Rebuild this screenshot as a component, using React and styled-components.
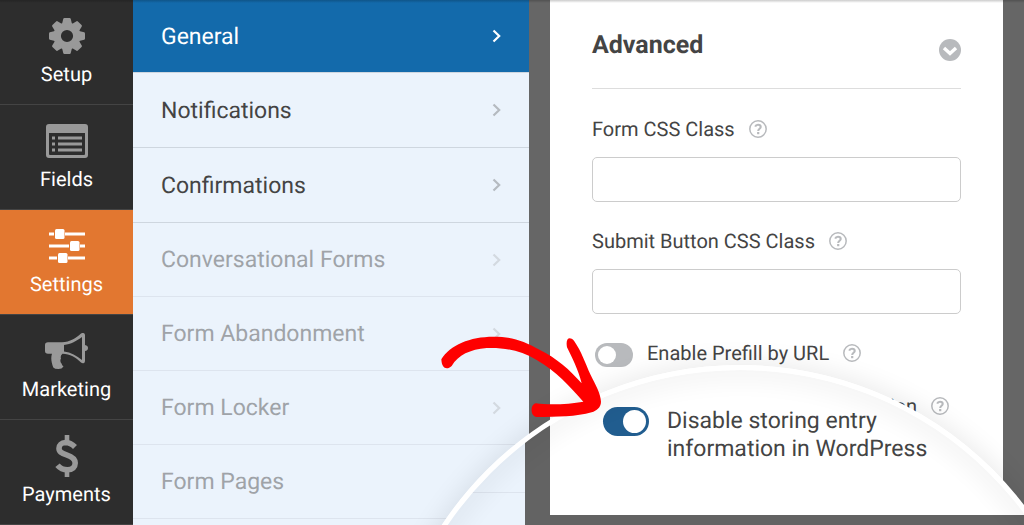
import React, { useState } from "react";
import styled, { createGlobalStyle } from "styled-components";

const GEAR_ANGLES = [0, 45, 90, 135, 180, 225, 270, 315];

const GearIcon = () => (
  <svg width="36" height="36" viewBox="-18 -18 36 36" aria-hidden="true">
    <circle r="9.8" fill="none" stroke="currentColor" strokeWidth="7.4" />
    {GEAR_ANGLES.map((angle) => (
      <path
        key={angle}
        d="M-5-12L-3.7-17.2Q-3.5-18-2.6-18H2.6Q3.5-18 3.7-17.2L5-12Z"
        fill="currentColor"
        transform={`rotate(${angle})`}
      />
    ))}
  </svg>
);

const FieldsIcon = () => (
  <svg width="42" height="34" viewBox="0 0 42 34" aria-hidden="true">
    <path
      fill="currentColor"
      fillRule="evenodd"
      d="M3 0H39Q42 0 42 3V31Q42 34 39 34H3Q0 34 0 31V3Q0 0 3 0ZM3 9V30Q3 31 4 31H38Q39 31 39 30V9Z"
    />
    <path
      stroke="currentColor"
      strokeWidth="3"
      d="M6 14H9M12 14H36M6 20H9M12 20H36M6 26H9M12 26H36"
    />
  </svg>
);

const SlidersIcon = () => (
  <svg width="36" height="34" viewBox="0 0 36 34" aria-hidden="true">
    <path
      stroke="currentColor"
      strokeWidth="3"
      d="M0 5H5M16 5H36M0 17H20M31 17H36M0 29H8M19 29H36"
    />
    <rect x="6" y="0" width="9.500" height="10" rx="1.5" fill="currentColor" />
    <rect x="21" y="12" width="9.500" height="10" rx="1.5" fill="currentColor" />
    <rect x="9" y="24" width="9.500" height="10" rx="1.5" fill="currentColor" />
  </svg>
);

const BullhornIcon = () => (
  <svg width="43" height="36" viewBox="0 0 43 36" aria-hidden="true">
    <path
      fill="currentColor"
      fillRule="evenodd"
      d="M3 9.300H17C25 9.300 31 5 36 .6Q37.200-.3 38.500 0Q40 .4 40 2V12Q43 12.500 43 15T40 18V28Q40 30 38.500 30.200Q37.200 30.500 36 29.500C31 24.500 25 21 17.500 20.800Q15 22.500 16 25.500Q14.500 28 16.500 30.500Q17 32.500 18.500 33.500Q17 36 13.500 36Q9.500 36 8.300 34.500C6.500 29.500 5.500 25 7 20.800H3Q0 20.800 0 18V12Q0 9.300 3 9.300ZM19 12V18.500C26 19.500 31.500 22.500 37 27V4C31.500 8 26 11.300 19 12Z"
    />
  </svg>
);

const DollarIcon = () => (
  <svg width="24" height="42" viewBox="0 0 24 42" aria-hidden="true">
    <path
      fill="none"
      stroke="currentColor"
      strokeWidth="5.600"
      d="M20 12C17 9 13.500 7.500 10.500 7.500C6.500 7.700 4 10 4 13.300C4 17 6.500 18.200 11.500 19.800C17.500 21.700 20.200 24 20.200 28C20.200 32 17.500 34.800 12.500 34.800C8.500 34.800 5 33.300 2.500 30.200"
    />
    <path stroke="currentColor" strokeWidth="4.600" d="M12 0V7M12 35V42" />
  </svg>
);

const ChevronIcon = () => (
  <svg width="9" height="14" viewBox="0 0 9 14" aria-hidden="true">
    <path
      d="M1.500 1.500L7.200 7L1.500 12.500"
      fill="none"
      stroke="currentColor"
      strokeWidth="2.200"
    />
  </svg>
);

const CollapseIcon = () => (
  <svg width="22" height="22" viewBox="0 0 22 22" aria-hidden="true">
    <circle cx="11" cy="11" r="11" fill="#b8babd" />
    <path d="M5 9L11 14.500L17 9" fill="none" stroke="#fff" strokeWidth="3.400" />
  </svg>
);

const HelpIcon = () => (
  <svg width="18" height="18" viewBox="0 0 18 18" aria-hidden="true">
    <circle cx="9" cy="9" r="8.200" fill="none" stroke="currentColor" strokeWidth="1.500" />
    <path
      d="M6.200 6.700C6.700 5.300 7.700 4.800 9 4.800C10.700 4.800 11.700 5.700 11.700 7C11.700 8.800 9.200 8.800 9.200 10.900"
      fill="none"
      stroke="currentColor"
      strokeWidth="2.100"
    />
    <rect x="8.100" y="12" width="2.200" height="2.200" fill="currentColor" />
  </svg>
);

const NAV_ITEMS = [
  { label: "Setup", Icon: GearIcon },
  { label: "Fields", Icon: FieldsIcon },
  { label: "Settings", Icon: SlidersIcon },
  { label: "Marketing", Icon: BullhornIcon },
  { label: "Payments", Icon: DollarIcon },
];

const MENU_ITEMS = [
  { label: "General" },
  { label: "Notifications" },
  { label: "Confirmations" },
  { label: "Conversational Forms", isLocked: true },
  { label: "Form Abandonment", isLocked: true },
  { label: "Form Locker", isLocked: true },
  { label: "Form Pages", isLocked: true },
];

const TEXT_FIELDS = [
  { id: "form-class", label: "Form CSS Class" },
  { id: "submit-class", label: "Submit Button CSS Class" },
];

const TOGGLES = [
  { id: "prefill", label: "Enable Prefill by URL" },
  { id: "ajax", label: "Enable AJAX form submission" },
];

export default function App() {
  const [panel, setPanel] = useState("Settings");
  const [section, setSection] = useState("General");
  const [toggles, setToggles] = useState({
    prefill: false,
    ajax: true,
    storing: true,
  });

  const handleToggle = (id) => {
    setToggles({ ...toggles, [id]: !toggles[id] });
  };

  return (
    <Page>
      <GlobalStyle />
      <Sidebar>
        {NAV_ITEMS.map(({ label, Icon }) => (
          <NavButton
            key={label}
            $active={panel === label}
            onClick={() => setPanel(label)}
          >
            <NavIcon>
              <Icon />
            </NavIcon>
            {label}
          </NavButton>
        ))}
      </Sidebar>

      <Menu>
        {MENU_ITEMS.map(({ label, isLocked }) => (
          <MenuButton
            key={label}
            $active={section === label}
            $locked={isLocked}
            onClick={() => !isLocked && setSection(label)}
          >
            {label}
            <ChevronIcon />
          </MenuButton>
        ))}
      </Menu>

      <Main>
        <Card>
          <CardHeader>
            <h2>Advanced</h2>
            <IconButton aria-label="Collapse section">
              <CollapseIcon />
            </IconButton>
          </CardHeader>
          {TEXT_FIELDS.map(({ id, label }) => (
            <Field key={id}>
              <FieldLabel>
                <label htmlFor={id}>{label}</label>
                <IconButton aria-label={`Help: ${label}`}>
                  <HelpIcon />
                </IconButton>
              </FieldLabel>
              <TextInput id={id} type="text" />
            </Field>
          ))}
          {TOGGLES.map(({ id, label }) => (
            <ToggleRow key={id}>
              <Toggle
                id={id}
                type="checkbox"
                checked={toggles[id]}
                onChange={() => handleToggle(id)}
              />
              <label htmlFor={id}>{label}</label>
              <IconButton aria-label={`Help: ${label}`}>
                <HelpIcon />
              </IconButton>
            </ToggleRow>
          ))}
        </Card>
      </Main>

      <Lens>
        <LensView>
          <LensMenu>
            <LensMenuRow />
          </LensMenu>
          <LensCard>
            <Toggle
              id="storing"
              type="checkbox"
              $large
              checked={toggles.storing}
              onChange={() => handleToggle("storing")}
            />
            <LensLabel htmlFor="storing">
              Disable storing entry
              <br />
              information in WordPress
            </LensLabel>
          </LensCard>
        </LensView>
      </Lens>

      <Arrow viewBox="30 48 486 246" aria-hidden="true">
        <path
          fill="#fe0000"
          d="M34 118C60 75 120 50 190 50C245 50 280 62 330 90C380 115 420 150 455 190C445 150 425 110 411 82C406 55 418 48 432 62C455 95 466 130 482 165C497 195 512 220 513 245C513 262 500 272 485 277C440 290 380 291 320 291C300 290 300 252 318 250C360 256 420 252 460 245C420 200 380 155 320 120C270 90 220 82 170 84C120 88 85 105 65 138C50 152 35 145 34 118Z"
        />
      </Arrow>
    </Page>
  );
}

const GlobalStyle = createGlobalStyle`
  * {
    box-sizing: border-box;
  }

  body {
    margin: 0;
    font-family: Roboto, "Liberation Sans", sans-serif;
    color: #444;
    text-rendering: geometricPrecision;
  }

  button {
    margin: 0;
    padding: 0;
    border: 0;
    background: none;
    font-family: inherit;
    text-rendering: inherit;
    cursor: pointer;
  }
`;

const Page = styled.div`
  position: relative;
  display: flex;
  height: 100vh;
  overflow: hidden;
  background: #666;

  /* shadow of the toolbar above */
  &::before {
    content: "";
    position: absolute;
    top: 0;
    left: 0;
    right: 0;
    height: 3px;
    background: linear-gradient(rgba(0, 0, 0, 0.2), rgba(0, 0, 0, 0));
    z-index: 1;
  }
`;

const Sidebar = styled.nav`
  flex: 0 0 133px;
  background: #2d2d2d;
`;

const NavButton = styled.button`
  display: flex;
  flex-direction: column;
  align-items: center;
  width: 100%;
  height: 105px;
  padding-top: 14px;
  border-bottom: 1px solid #444;
  background: ${({ $active }) => ($active ? "#e27730" : "transparent")};
  color: #fff;
  font-size: 20px;
  line-height: 32px;

  svg {
    color: ${({ $active }) => ($active ? "#fff" : "#999")};
  }
`;

const NavIcon = styled.span`
  display: grid;
  place-items: center;
  height: 44px;
`;

const Menu = styled.nav`
  flex: 0 0 396px;
  background: #ebf3fc;
`;

const MenuButton = styled.button`
  display: flex;
  justify-content: space-between;
  align-items: center;
  width: 100%;
  height: ${({ $locked }) => ($locked ? 74 : 75)}px;
  padding: 0 28px;
  border-bottom: 1px solid ${({ $locked }) => ($locked ? "#dde4ee" : "#ced6df")};
  background: ${({ $active }) => ($active ? "#136aab" : "transparent")};
  color: ${({ $active, $locked }) =>
    $active ? "#fff" : $locked ? "#9fa3a8" : "#444"};
  font-size: 23px;

  &:first-child {
    height: 73px;
  }

  svg {
    color: ${({ $active, $locked }) =>
      $active ? "#fff" : $locked ? "#d3d9e0" : "#b5bac0"};
  }
`;

const Main = styled.main`
  flex: 1;
  min-width: 0;
  padding: 0 21px 10px;
`;

const Card = styled.section`
  height: 100%;
  padding: 0 42px;
  background: #fff;
`;

const CardHeader = styled.header`
  display: flex;
  justify-content: space-between;
  align-items: center;
  height: 89px;
  padding-top: 12px;
  border-bottom: 1px solid #ddd;

  h2 {
    margin: 0;
    padding-bottom: 8px;
    font-size: 25px;
    line-height: 32px;
  }
`;

const IconButton = styled.button`
  display: grid;
  color: #b8babd;
`;

const Field = styled.div`
  padding-top: 26px;

  & + & {
    padding-top: 25px;
  }
`;

const FieldLabel = styled.div`
  display: flex;
  align-items: center;
  gap: 14px;
  padding-bottom: 14px;
  font-size: 20px;
  line-height: 28px;
`;

const TextInput = styled.input`
  display: block;
  width: 100%;
  height: 45px;
  padding: 0 12px;
  border: 1px solid #ccc;
  border-radius: 5px;
  background: #fff;
  font: inherit;
`;

const ToggleRow = styled.div`
  display: flex;
  align-items: center;
  gap: 14px;
  height: 28px;
  margin: 25px 0 0 3px;
  font-size: 20px;
  line-height: 28px;
  white-space: nowrap;
`;

const Toggle = styled.input`
  appearance: none;
  flex: none;
  display: flex;
  justify-content: flex-start;
  width: ${({ $large }) => ($large ? 46 : 38)}px;
  height: ${({ $large }) => ($large ? 29 : 24)}px;
  margin: ${({ $large }) => ($large ? 0 : "4px 0 0")};
  padding: 3px;
  border-radius: 15px;
  background: #b8babd;
  cursor: pointer;

  &::before {
    content: "";
    height: 100%;
    aspect-ratio: 1;
    border-radius: 50%;
    background: #fff;
  }

  &:checked {
    justify-content: flex-end;
    background: #215d8f;
  }
`;

/* magnifying glass laid over the menu and the card */
const Lens = styled.div`
  position: absolute;
  top: 365px;
  left: 382px;
  width: 716px;
  height: 716px;
  padding: 2px;
  border-radius: 50%;
  box-shadow: 0 0 24px 4px rgba(0, 0, 0, 0.08);

  &::after {
    content: "";
    position: absolute;
    inset: 0;
    border: 5px solid #fff;
    border-radius: 50%;
    box-shadow: inset 0 0 20px 14px rgba(0, 0, 0, 0.035);
    pointer-events: none;
  }
`;

const LensView = styled.div`
  display: flex;
  align-items: flex-start;
  gap: 25px;
  height: 100%;
  border-radius: 50%;
  overflow: hidden;
  background: #636363;
`;

const LensMenu = styled.div`
  flex: 0 0 141px;
  height: 100%;
  background: #ebf3fc;
`;

const LensMenuRow = styled.div`
  height: 126px;
  border-bottom: 1px solid #dde4ee;
`;

const LensCard = styled.div`
  flex: 1;
  display: flex;
  align-items: flex-start;
  gap: 18px;
  height: 148px;
  padding: 40px 0 0 53px;
  background: #fff;
`;

const LensLabel = styled.label`
  font-size: 23px;
  line-height: 28px;
`;

const Arrow = styled.svg`
  position: absolute;
  top: 336px;
  left: 440px;
  width: 162px;
  height: 82px;
  pointer-events: none;
`;
